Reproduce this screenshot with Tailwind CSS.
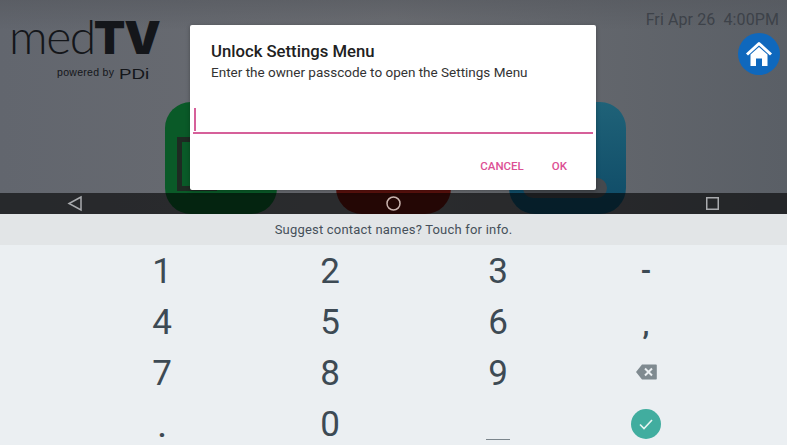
<!DOCTYPE html>
<html lang="en">
<head>
    <meta charset="UTF-8">
    <meta name="viewport" content="width=device-width, initial-scale=1.0">
    <title>Unlock Settings Menu</title>
    <script src="https://cdn.jsdelivr.net/npm/@tailwindcss/browser@4"></script>
</head>
<body class="m-0 overflow-hidden bg-[#ebeff2]">
<div class="relative w-[787px] h-[445px] overflow-hidden font-['Roboto',sans-serif]">

    <!-- Launcher behind the dim layer -->
    <section class="relative h-[214px] overflow-hidden bg-gradient-to-r from-[#62666e] via-[#6b6d72] to-[#5a5f66]">
        <div class="absolute inset-x-0 top-0 h-[30px] bg-gradient-to-b from-[#55585e]/60 to-transparent"></div>

        <!-- App icons -->
        <div class="absolute left-[165px] top-[102px] w-[112px] h-[112px] rounded-[26px] bg-[#0a5a28]">
            <div class="absolute left-[12px] top-[35px] w-[40px] h-[54px] border-[5px] border-[#1e2a22]"></div>
        </div>
        <div class="absolute left-[336px] top-[130px] w-[115px] h-[84px] rounded-b-[26px] bg-[#5a120e]"></div>
        <div class="absolute left-[509px] top-[102px] w-[117px] h-[112px] rounded-[26px] bg-gradient-to-b from-[#1f6278] to-[#0e4a66]">
            <div class="absolute left-[14px] top-[76px] w-[84px] h-[20px] rounded-[10px] bg-[#45494e]"></div>
        </div>

        <!-- Logo -->
        <div class="absolute left-[9px] top-[13px] w-[155px] text-[#14161a]">
            <div class="flex items-baseline h-[46px] leading-[46px] font-['Lato',sans-serif] text-[48px]">
                <span class="font-light tracking-[-1.500px]">med</span><span class="font-['Inter',sans-serif] font-black text-[46px] ml-[-1px] tracking-[-1px]">TV</span>
            </div>
            <div class="flex items-center ml-[48px] mt-[7px] h-[14px] font-['Liberation_Sans',sans-serif]">
                <span class="text-[10.500px] tracking-[0.3px]">powered by</span>
                <span class="text-[15px] ml-[5px] leading-none scale-x-125 origin-left">PDi</span>
            </div>
        </div>

        <!-- Clock -->
        <div class="absolute right-[8px] top-[10px] text-[16px] leading-[20px] tracking-[0.1px] text-[#3d4249] whitespace-pre">Fri Apr 26  4:00PM</div>

        <!-- Home button -->
        <div class="absolute left-[738px] top-[33px] w-[42px] h-[42px] rounded-full bg-[#0f68bd] flex items-center justify-center">
            <svg width="28" height="26" viewBox="0 0 28 26" fill="none">
                <path d="M2 13.500 14 2.500l12 11" stroke="#fff" stroke-width="3" stroke-linejoin="round"/>
                <path d="M5.500 13.500 14 6l8.500 7.500V25H17v-7.500h-6V25H5.500z" fill="#fff"/>
            </svg>
        </div>

        <!-- Navigation bar -->
        <nav class="absolute inset-x-0 bottom-0 h-[21px] bg-black/60">
            <svg class="absolute left-[67px] top-[2px]" width="16" height="17" viewBox="0 0 16 17" fill="none">
                <path d="M14 2 2 8.500 14 15z" stroke="#a9abae" stroke-width="1.500"/>
            </svg>
            <svg class="absolute left-[385px] top-[2px]" width="17" height="17" viewBox="0 0 17 17" fill="none">
                <circle cx="8.500" cy="8.500" r="6.500" stroke="#c9b3ae" stroke-width="1.500"/>
            </svg>
            <svg class="absolute left-[705px] top-[3px]" width="15" height="15" viewBox="0 0 15 15" fill="none">
                <rect x="1.750" y="1.750" width="11.500" height="11.500" stroke="#a9abae" stroke-width="1.500"/>
            </svg>
        </nav>
    </section>

    <!-- Keyboard -->
    <section class="bg-[#ebeff2]">
        <div class="h-[31px] bg-[#e2e5e7] flex items-center justify-center text-[13px] tracking-[0.2px] text-[#46505a]">Suggest contact names? Touch for info.</div>
        <div class="grid grid-cols-[168px_168px_168px_128px] auto-rows-[51px] pl-[78px] text-[#3d4a54] text-[35px] leading-none">
            <div class="flex items-center justify-center pt-[2px]">1</div>
            <div class="flex items-center justify-center pt-[2px]">2</div>
            <div class="flex items-center justify-center pt-[2px]">3</div>
            <div class="flex items-center justify-center text-[28px] font-bold">-</div>

            <div class="flex items-center justify-center pt-[2px]">4</div>
            <div class="flex items-center justify-center pt-[2px]">5</div>
            <div class="flex items-center justify-center pt-[2px]">6</div>
            <div class="flex items-center justify-center text-[28px] font-bold pt-[6px]">,</div>

            <div class="flex items-center justify-center pt-[2px]">7</div>
            <div class="flex items-center justify-center pt-[2px]">8</div>
            <div class="flex items-center justify-center pt-[2px]">9</div>
            <div class="flex items-center justify-center pb-[2px]">
                <svg width="22" height="16" viewBox="0 0 22 16">
                    <path d="M7 0.500h14a.8.800 0 0 1 .8.800v13.400a.8.800 0 0 1-.8.800H7L1 8z" fill="#7f8a90"/>
                    <path d="m10 4.500 7 7m0-7-7 7" stroke="#ebeff2" stroke-width="2"/>
                </svg>
            </div>

            <div class="flex items-center justify-center text-[28px] font-bold pt-[8px]">.</div>
            <div class="flex items-center justify-center pt-[2px]">0</div>
            <div class="flex items-end justify-center pb-[9px]"><div class="w-[24px] h-[1.500px] bg-[#7b858c]"></div></div>
            <div class="flex items-center justify-center">
                <div class="w-[30px] h-[30px] rounded-full bg-[#41ad9f] flex items-center justify-center">
                    <svg width="16" height="12" viewBox="0 0 16 12" fill="none">
                        <path d="m2 6.500 4 4 8-8.500" stroke="#e6f5f2" stroke-width="1.600"/>
                    </svg>
                </div>
            </div>
        </div>
    </section>

    <!-- Passcode dialog -->
    <div class="absolute left-[190px] top-[25px] w-[406px] h-[165px] bg-white rounded-[2px] shadow-[0_1px_4px_rgba(0,0,0,0.3)] flex flex-col">
        <div class="pl-[21px] pt-[17px]">
            <h1 class="text-[16.700px] leading-[20px] font-medium text-[#212121]">Unlock Settings Menu</h1>
            <p class="text-[13.500px] leading-[20px] text-[#333]">Enter the owner passcode to open the Settings Menu</p>
        </div>
        <div class="mx-[3px] mt-[26px] h-[26px] border-b-2 border-[#d6609a]">
            <div class="w-[2px] h-[23px] ml-[1px] bg-[#d6609a]"></div>
        </div>
        <div class="flex justify-end gap-[28px] pr-[29px] pt-[24px] text-[11.500px] leading-[16px] font-medium text-[#dc5094]">
            <button>CANCEL</button>
            <button>OK</button>
        </div>
    </div>
</div>
</body>
</html>
